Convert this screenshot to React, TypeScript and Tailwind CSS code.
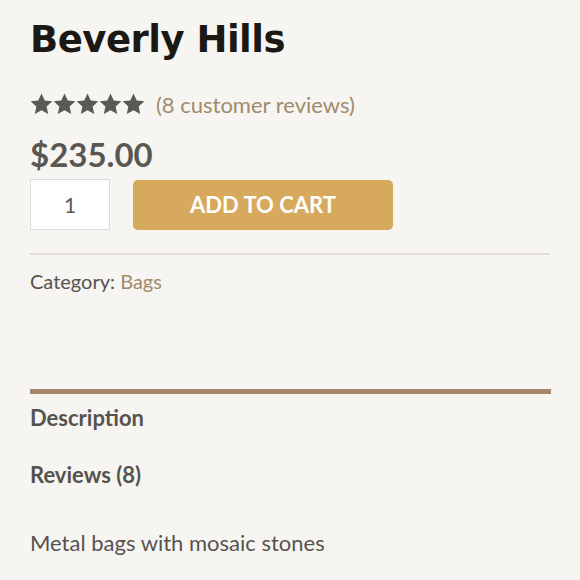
import React from "react";

const Star = () => (
  <svg width="23" height="22" viewBox="0 0 24 23" className="block">
    <path
      d="M12 0.6l3.4 7.2 7.9 0.9-5.9 5.4 1.6 7.8L12 18l-7 3.9 1.6-7.8L0.7 8.7l7.9-0.9z"
      fill="#5b5955"
    />
  </svg>
);

export default function App() {
  return (
    <div className="w-[580px] h-[580px] overflow-hidden bg-[#f7f5f2] px-[30px] font-['Lato',sans-serif] text-[#56534f]">
      <h1 className="pt-[15px] text-[37px] leading-[50px] font-bold text-[#1c1915] font-['DejaVu_Sans',sans-serif] tracking-[-0.5px]">
        Beverly Hills
      </h1>
      <div className="mt-[26px] flex items-center h-[26px]">
        <div className="flex">
          <Star />
          <Star />
          <Star />
          <Star />
          <Star />
        </div>
        <span className="ml-[11px] text-[22px] text-[#a08a6c]">(8 customer reviews)</span>
      </div>
      <div className="mt-[17px] text-[33px] leading-[40px] font-bold text-[#5a5753]">$235.00</div>
      <div className="mt-[5px] flex items-center">
        <div className="w-[80px] h-[51px] bg-white border border-[#dddbd7] flex items-center justify-center text-[21px] text-[#5a5753]">
          1
        </div>
        <button className="ml-[23px] w-[260px] h-[50px] rounded-[5px] bg-[#d6a95c] text-white text-[22px] font-bold">
          ADD TO CART
        </button>
      </div>
      <div className="mt-[23px] h-[2px] bg-[#e3e0dc] w-[520px]" />
      <div className="mt-[14px] text-[20px] leading-[24px]">
        Category: <span className="text-[#a08a6c]">Bags</span>
      </div>
      <div className="mt-[96px] h-[5px] bg-[#a4876a] w-[521px]" />
      <div className="mt-[11px] text-[22px] leading-[26px] font-bold">Description</div>
      <div className="mt-[31px] text-[22px] leading-[26px] font-bold">Reviews (8)</div>
      <div className="mt-[42px] text-[22px] leading-[26px]">Metal bags with mosaic stones</div>
    </div>
  );
}
